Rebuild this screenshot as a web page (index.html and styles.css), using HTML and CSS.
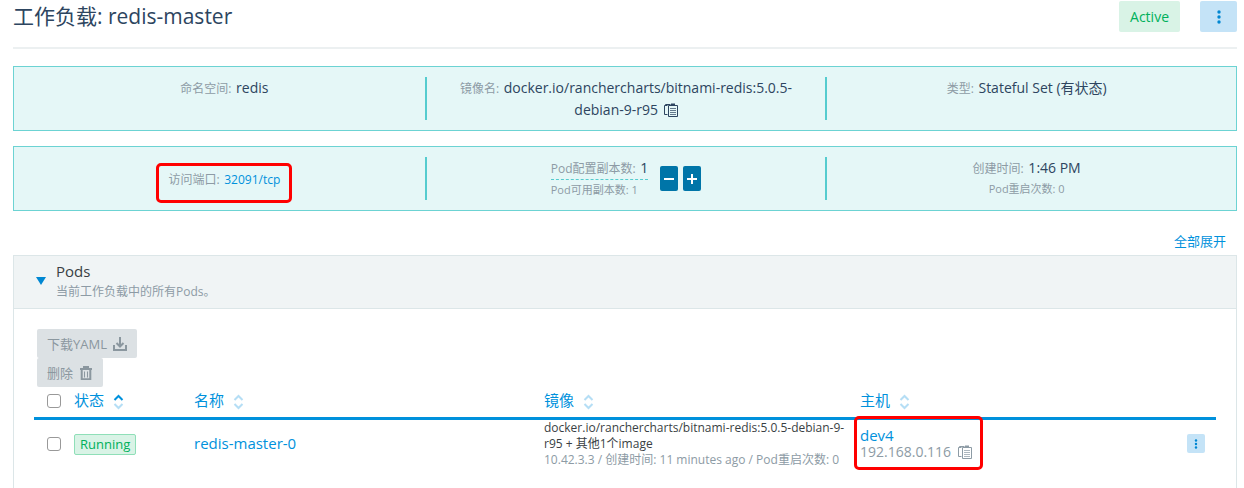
FILE: index.html
```html
<!DOCTYPE html>
<html lang="zh-CN">

<head>
    <meta charset="UTF-8" />
    <title>redis-master</title>
    <link rel="stylesheet" href="styles.css">
</head>

<body>
    <svg class="sprite" aria-hidden="true">
        <symbol id="clipboard" viewBox="0 0 14 14">
            <path d="M3.500 2.500h-3v9h3M1.500 2.500v-1h5" fill="none" stroke="currentColor" />
            <path d="M4.500 2.500h9v11h-9z" fill="none" stroke="currentColor" />
            <path d="M7 0.500h4v2H7z" fill="currentColor" />
            <path d="M6 5.500h6M6 7.500h6M6 9.500h6M6 11.500h6" stroke="currentColor" opacity="0.700" />
        </symbol>
        <symbol id="sort" viewBox="0 0 10 16">
            <path class="up" d="M1 6l4-4 4 4" fill="none" stroke-width="2" />
            <path d="M1 10l4 4 4-4" fill="none" stroke-width="2" />
        </symbol>
        <symbol id="dots" viewBox="0 0 4 14">
            <circle cx="2" cy="2" r="1.700" />
            <circle cx="2" cy="7" r="1.700" />
            <circle cx="2" cy="12" r="1.700" />
        </symbol>
    </svg>

    <main>
        <header class="title">
            <h1>工作负载: redis-master</h1>
            <span class="state">Active</span>
            <button class="menu" aria-label="操作"><svg class="dots"><use href="#dots" /></svg></button>
        </header>

        <section class="banner">
            <div class="col"><p><span class="label">命名空间:</span> redis</p></div>
            <div class="col"><p><span class="label">镜像名:</span> docker.io/ranchercharts/bitnami-redis:5.0.5-debian-9-r95 <svg class="clip"><use href="#clipboard" /></svg></p></div>
            <div class="col"><p><span class="label">类型:</span> Stateful Set (有状态)</p></div>
        </section>

        <section class="banner">
            <div class="col middle"><p class="marked port"><span class="label">访问端口:</span> <a href="#">32091/tcp</a></p></div>
            <div class="col middle scale">
                <div class="counts">
                    <p><span class="label">Pod配置副本数:</span> 1</p>
                    <p class="small">Pod可用副本数: 1</p>
                </div>
                <div class="steps">
                    <button aria-label="减少"><svg viewBox="0 0 10 10"><path d="M0 5h10" /></svg></button>
                    <button aria-label="增加"><svg viewBox="0 0 10 10"><path d="M0 5h10M5 0v10" /></svg></button>
                </div>
            </div>
            <div class="col">
                <p><span class="label">创建时间:</span> 1:46 PM</p>
                <p class="small">Pod重启次数: 0</p>
            </div>
        </section>

        <div class="expand"><a href="#">全部展开</a></div>

        <section class="accordion">
            <div class="accordion-head">
                <svg class="arrow" viewBox="0 0 10 8"><path d="M0 0h10L5 8z" /></svg>
                <div>
                    <h2>Pods</h2>
                    <p>当前工作负载中的所有Pods。</p>
                </div>
            </div>
            <div class="accordion-body">
                <div class="bulk">
                    <button disabled>下载YAML
                        <svg viewBox="0 0 14 14"><path d="M1 8v5h12V8M7 0v9M3.500 6L7 9.500 10.500 6" fill="none" stroke="currentColor" stroke-width="2" /></svg>
                    </button>
                    <button disabled>删除
                        <svg viewBox="0 0 14 14"><path d="M1 3h12M5 2.500V1h4v1.500" fill="none" stroke="currentColor" stroke-width="2" /><path d="M2.700 4v9.200h8.600V4" fill="none" stroke="currentColor" stroke-width="2" /><path d="M5.500 5.500v6M8.500 5.500v6" stroke="currentColor" /></svg>
                    </button>
                </div>
                <table>
                    <thead>
                        <tr>
                            <th class="check"><input type="checkbox" aria-label="全选"></th>
                            <th class="status">状态 <svg class="sort asc"><use href="#sort" /></svg></th>
                            <th class="name">名称 <svg class="sort"><use href="#sort" /></svg></th>
                            <th class="image">镜像 <svg class="sort"><use href="#sort" /></svg></th>
                            <th>主机 <svg class="sort"><use href="#sort" /></svg></th>
                            <th class="actions"></th>
                        </tr>
                    </thead>
                    <tbody>
                        <tr>
                            <td class="check"><input type="checkbox" aria-label="redis-master-0"></td>
                            <td><span class="badge">Running</span></td>
                            <td><a href="#">redis-master-0</a></td>
                            <td class="image">
                                <p>docker.io/ranchercharts/bitnami-redis:5.0.5-debian-9-r95 + 其他1个image</p>
                                <p class="muted">10.42.3.3 / 创建时间: 11 minutes ago / Pod重启次数: 0</p>
                            </td>
                            <td>
                                <div class="marked host">
                                    <a href="#">dev4</a>
                                    <p class="muted">192.168.0.116 <svg class="clip"><use href="#clipboard" /></svg></p>
                                </div>
                            </td>
                            <td class="actions"><button class="menu mini" aria-label="操作"><svg class="dots"><use href="#dots" /></svg></button></td>
                        </tr>
                    </tbody>
                </table>
            </div>
        </section>
    </main>
</body>

</html>
```
FILE: styles.css
```css
*, *::after {
    box-sizing: border-box;
}
body {
    margin: 0;
    font-family: "Open Sans", "Noto Sans CJK SC", sans-serif;
    font-size: 14px;
    font-weight: 400;
    line-height: 21px;
    color: #2d4560;
    background: #fff;
    overflow: hidden;
}
main {
    padding: 0 7px 0 13px;
}
h1, h2, p {
    margin: 0;
    font-weight: 400;
}
a {
    color: #0091dc;
    text-decoration: none;
}
button {
    border: none;
    padding: 0;
    font-family: inherit;
    cursor: pointer;
}
.sprite {
    position: absolute;
    width: 0;
    height: 0;
}
.title {
    display: flex;
    align-items: flex-start;
    height: 49px;
    padding-top: 1px;
    border-bottom: 2px solid #ecf0f1;
}
h1 {
    flex: 1;
    font-size: 21px;
    line-height: 30px;
}
.state {
    padding: 0 11px;
    margin-right: 20px;
    line-height: 31px;
    color: #00b05b;
    background: #d9f3e6;
    border-radius: 2px;
}
.menu {
    display: flex;
    align-items: center;
    justify-content: center;
    width: 37px;
    height: 31px;
    background: #c4e3f7;
    border-radius: 2px;
}
.dots {
    width: 4px;
    height: 14px;
    fill: #0087d2;
}
.menu.mini {
    width: 18px;
    height: 19px;
}
.mini .dots {
    height: 10px;
}
.banner {
    display: grid;
    grid-template-columns: repeat(3, 1fr);
    height: 65px;
    margin-top: 17px;
    padding: 10px;
    background: #e5f7f7;
    border: 1px solid #6cd3d3;
}
.banner + .banner {
    margin-top: 15px;
}
.col {
    padding: 0 28px;
    text-align: center;
}
.col + .col {
    border-left: 2px solid #55cccf;
}
.label {
    margin-right: 1px;
    font-size: 12px;
    color: #8d9ba5;
}
.small {
    font-size: 11px;
    line-height: 20px;
    color: #8d9ba5;
}
.middle {
    display: flex;
    align-items: center;
    justify-content: center;
}
.middle a {
    font-size: 12px;
}
.clip {
    width: 14px;
    height: 14px;
    margin-left: 2px;
    vertical-align: -2px;
}
.scale {
    gap: 12px;
}
.counts {
    text-align: left;
}
.counts .small {
    border-top: 1px dashed #55cccf;
}
.steps {
    display: flex;
    gap: 5px;
}
.steps button {
    display: flex;
    align-items: center;
    justify-content: center;
    width: 18px;
    height: 25px;
    background: #0075a8;
    border-radius: 2px;
}
.steps svg {
    width: 10px;
    height: 10px;
    stroke: #fff;
    stroke-width: 2;
}
/* red highlight boxes */
.marked {
    position: relative;
}
.marked::after {
    content: "";
    position: absolute;
    border: 3px solid #f00;
    border-radius: 5px;
    pointer-events: none;
}
.port::after {
    inset: -5px -12px -13px;
}
.host::after {
    inset: -11px auto -10px -6px;
    width: 129px;
}
.expand {
    padding: 20px 11px 3px;
    font-size: 13px;
    text-align: right;
}
.accordion {
    border: 1px solid #dce6e8;
    border-bottom: none;
}
.accordion-head {
    display: flex;
    align-items: center;
    gap: 10px;
    height: 53px;
    padding: 0 22px 2px;
    background: #f0f4f5;
    border-bottom: 1px solid #dce6e8;
}
.arrow {
    width: 10px;
    height: 8px;
    fill: #0087d2;
}
h2 {
    font-size: 15px;
    line-height: 20px;
    color: #3a3f44;
}
.accordion-head p {
    font-size: 12px;
    color: #8d9ba5;
}
.accordion-body {
    padding: 20px 20px 40px;
}
.bulk {
    display: flex;
    flex-direction: column;
    align-items: flex-start;
    padding-left: 3px;
}
.bulk button {
    display: flex;
    align-items: center;
    gap: 6px;
    height: 29px;
    padding: 0 10px;
    font-size: 13px;
    color: #8b979f;
    background: #dce1e4;
    border-radius: 2px;
}
.bulk svg {
    width: 14px;
    height: 14px;
}
table {
    width: 100%;
    table-layout: fixed;
    border-collapse: collapse;
}
th {
    height: 31px;
    padding: 0 0 2px;
    font-size: 15px;
    font-weight: 400;
    text-align: left;
    color: #0091dc;
    border-bottom: 3px solid #0091dc;
}
td {
    height: 48px;
    padding: 0;
    font-size: 15px;
}
.check {
    width: 40px;
    padding-left: 13px;
}
.status {
    width: 120px;
}
.name {
    width: 350px;
}
.image {
    width: 316px;
}
.actions {
    width: 29px;
}
input[type="checkbox"] {
    appearance: none;
    display: block;
    width: 14px;
    height: 14px;
    margin: 0;
    background: #fff;
    border: 1px solid #999;
    border-radius: 3px;
}
.sort {
    width: 11px;
    height: 16px;
    margin-left: 5px;
    vertical-align: -4px;
    stroke: #b5def5;
}
.up {
    stroke: var(--up, #b5def5);
}
.asc {
    --up: #0091dc;
}
.badge {
    display: inline-block;
    padding: 0 5px;
    font-size: 13px;
    line-height: 19px;
    color: #00b05b;
    background: #d9f3e6;
    border: 1px solid #8fdfb8;
    border-radius: 2px;
}
td.image {
    font-size: 12px;
    line-height: 16px;
    color: #3a3f44;
}
td .muted {
    color: #8d9ba5;
}
td.image .muted {
    white-space: nowrap;
}
.host a {
    display: block;
    line-height: 16px;
}
.host .muted {
    font-size: 14px;
    line-height: 17px;
}
.host .clip {
    margin-left: 3px;
}
```
